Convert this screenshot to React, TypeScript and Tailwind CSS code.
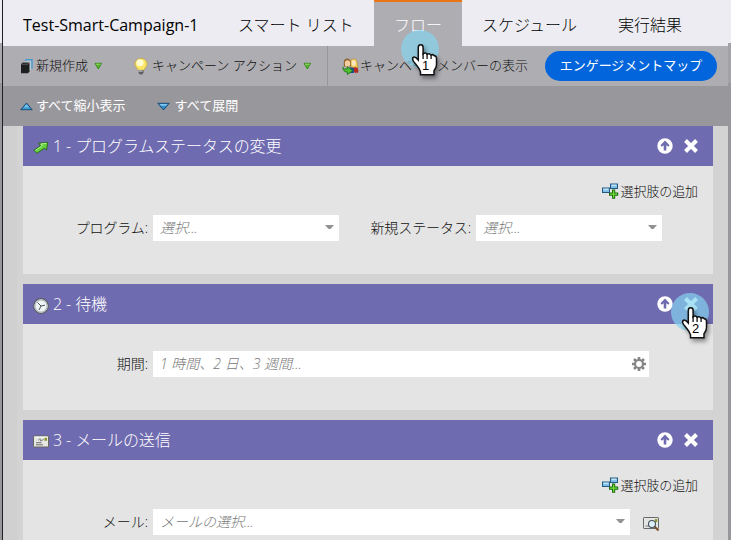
import React from "react";

const ja = "font-['Open_Sans','Noto_Sans_CJK_JP',sans-serif]";

function Label({ children, className = "" }: { children: React.ReactNode; className?: string }) {
  return <span className={`block shrink-0 whitespace-nowrap ${className}`}>{children}</span>;
}

function BooksIcon() {
  return (
    <svg width="12" height="15" viewBox="0 0 12 15" className="shrink-0">
      <path d="M4 1.800 5.500.7H11v9" fill="none" stroke="#3d9bd6" strokeWidth="1.300" />
      <path d="M3 3 4.500 2.300H10v8.500L8.500 12" fill="#c0ccd2" />
      <path d="M0 5 2 3.400h6.500v9L7 14.200H0z" fill="#1d1f21" />
      <path d="M.5 5.200h6.200l1.300-1.200" stroke="#777" strokeWidth=".7" fill="none" />
    </svg>
  );
}

function BulbIcon() {
  return (
    <svg width="14" height="17" viewBox="0 0 14 17" className="shrink-0">
      <path d="M7 .5C3.300.5 1 3 1 6c0 2.300 1.500 3.700 2.500 4.900.4.500.5 1.300.9 1.300h5.200c.4 0 .5-.8.9-1.300C11.500 9.700 13 8.300 13 6c0-3-2.300-5.500-6-5.500z" fill="#fbe566" stroke="#c9a63c" strokeWidth=".8" />
      <ellipse cx="6" cy="4.800" rx="3.600" ry="3.500" fill="#fffcd0" />
      <path d="M4.500 12h5v3L8 16.500H6L4.500 15z" fill="#5c6064" />
      <path d="M4.500 13h4" stroke="#e4e7ea" />
    </svg>
  );
}

function GreenDown() {
  return (
    <svg width="9" height="8" viewBox="0 0 9 8" className="shrink-0">
      <path d="M1 1.300h6.600L4.300 7z" fill="#58b82c" stroke="#32841b" strokeWidth=".9" />
      <path d="M2 2.200h4.500" stroke="#a6df78" strokeWidth=".8" />
    </svg>
  );
}

function BlueUp() {
  return (
    <svg width="13" height="9" viewBox="0 0 13 9" className="shrink-0">
      <path d="M6.500 1 12.200 7.700H.8z" fill="#3d9ad5" stroke="#17466d" strokeWidth=".9" />
      <path d="M6.500 2.500 9 5.200H4z" fill="#82c7ec" />
    </svg>
  );
}

function BlueDown() {
  return (
    <svg width="13" height="9" viewBox="0 0 13 9" className="shrink-0">
      <path d="M6.500 8 .8 1.300h11.400z" fill="#2f8ccb" stroke="#17466d" strokeWidth=".9" />
      <path d="M2.500 2h8L9 3.800H4z" fill="#82c7ec" />
    </svg>
  );
}

function MembersIcon() {
  return (
    <svg width="17" height="17" viewBox="0 0 17 17" className="shrink-0">
      <path d="M8.500 3c.5-2.800 5.500-3 6.500 0l1 7h-7z" fill="#edc95a" stroke="#a77b24" strokeWidth=".5" />
      <ellipse cx="11.800" cy="5" rx="2.100" ry="3" fill="#fbe6ba" />
      <path d="M10 10.500q3-2 5.500-.5 1.500 2 .8 4.500L13 15z" fill="#b02c24" />
      <path d="M1.800 8.500V4c0-4.500 6.500-4.800 7 0v4.500z" fill="#8f6130" />
      <ellipse cx="5.500" cy="5.600" rx="2.700" ry="3.300" fill="#f4ce9e" />
      <path d="M7 10q4-2 5 1v4H7z" fill="#20508e" />
      <path d="M.8 9.300q1 2.200 4.500 1.800V8.500l5.500 4.300-5.500 3.700V14Q1 14.200.8 9.300z" fill="#4dc22f" stroke="#176d15" strokeWidth=".8" />
    </svg>
  );
}

function StatusArrow() {
  return (
    <svg width="16" height="14" viewBox="0 0 16 14" className="shrink-0">
      <path d="M.8 9.300 7.500 4.700 5.500 2.300l9.300-1-1.300 7.700-2.200-1.700L4 12.300z" fill="#63cf3b" stroke="#25641c" strokeWidth=".9" />
      <path d="M2.300 9.500 9.300 4.700 8 3l5.500-.7" fill="none" stroke="#b8ef91" />
    </svg>
  );
}

function ClockIcon() {
  return (
    <svg width="16" height="16" viewBox="0 0 16 16" className="shrink-0">
      <circle cx="8" cy="8" r="7.300" fill="#eff4f5" stroke="#565b5f" strokeWidth="1.200" />
      <circle cx="8" cy="8" r="6.100" fill="none" stroke="#b1b8bb" strokeWidth="1.200" />
      <path d="M4.500 4.500 8 8l4-.8M8 8l-2 4" fill="none" stroke="#4c535b" strokeWidth="1" />
    </svg>
  );
}

function MailIcon() {
  return (
    <svg width="16" height="13" viewBox="0 0 16 13" className="shrink-0">
      <rect x=".5" y="1" width="15" height="11" rx=".6" fill="#e6e6e2" stroke="#66675f" />
      <path d="M1.500 2h13" stroke="#fff" />
      <rect x="11.500" y="2.800" width="2.500" height="3" fill="#92952c" />
      <path d="M3 7.700h5.500M3 9.800h7" stroke="#6d7070" strokeWidth="1" />
      <path d="M5.500 5.500q.5-2.500 2-1.500t-.5 2q2 0 4-2" fill="none" stroke="#7b8283" strokeWidth=".9" />
    </svg>
  );
}

function MailSearchIcon() {
  return (
    <svg width="17" height="15" viewBox="0 0 17 15" className="shrink-0">
      <rect x=".5" y="1.500" width="15" height="11" rx=".6" fill="#e4e6e4" stroke="#686b6b" />
      <rect x="12" y="3" width="2.300" height="3" fill="#92952c" />
      <path d="M2.500 10h4" stroke="#777" />
      <path d="m11.500 10.500 4 4" stroke="#79502e" strokeWidth="2" />
      <circle cx="9" cy="8" r="3.500" fill="#dcf0f7" stroke="#46525a" strokeWidth="1.100" />
    </svg>
  );
}

function AddChoice() {
  return (
    <div className="flex items-center gap-[2px] text-[13px] leading-5 text-[#111]">
      <svg width="17" height="16" viewBox="0 0 17 16" className="shrink-0">
        <rect x=".5" y="5" width="7" height="4.500" fill="#7fc1ea" stroke="#24587f" />
        <rect x="8.500" y="1" width="7" height="4.500" fill="#7fc1ea" stroke="#24587f" />
        <path d="M1.500 6.200h5M9.500 2.200h5" stroke="#def5ff" />
        <path d="M10 6.500h3.200v3h3v3.200h-3v3H10v-3H7V9.500h3z" fill="#1c6a14" />
        <path d="M11.600 7.500v7.200M8 11.100h7.200" stroke="#70df32" strokeWidth="1.300" />
      </svg>
      <Label className="font-light tracking-[-0.1px]">選択肢の追加</Label>
    </div>
  );
}

function UpIcon() {
  return (
    <svg width="16" height="16" viewBox="0 0 16 16" className="shrink-0">
      <circle cx="8" cy="8" r="7.700" fill="#fff" />
      <path d="M8 2.600 12.500 7.300l-1.300 1.400-1.900-1.500v5.300H6.700V7.200L4.800 8.700 3.500 7.300z" fill="#6f6bb0" />
    </svg>
  );
}

function CloseIcon() {
  return (
    <svg width="14" height="14" viewBox="0 0 14 14" className="shrink-0">
      <path d="m1.500 1.500 11 11m0-11-11 11" stroke="#fff" strokeWidth="4" />
    </svg>
  );
}

function Gear() {
  return (
    <svg width="14" height="14" viewBox="0 0 14 14" className="shrink-0">
      <g stroke="#858585" strokeWidth="2.600">
        <path d="M7 0v3M7 11v3M0 7h3M11 7h3M2 2l2.200 2.200M9.800 9.800 12 12M12 2 9.800 4.200M4.200 9.800 2 12" />
        <circle cx="7" cy="7" r="4" fill="#fff" strokeWidth="2.200" />
      </g>
    </svg>
  );
}

function Caret() {
  return (
    <svg width="9" height="5" viewBox="0 0 9 5" className="shrink-0">
      <path d="M0 0h9L5.500 4h-2z" fill="#929292" />
    </svg>
  );
}

function Field({ width, text, gear = false }: { width: string; text: string; gear?: boolean }) {
  return (
    <div className={`flex h-[26px] shrink-0 items-center justify-between bg-white pl-[7px] ${gear ? "pr-[3px]" : "pr-[5px]"} text-sm italic text-[#777] ${width}`}>
      <Label className="font-light">{text}</Label>
      {gear ? <Gear /> : <div className="pb-0.5"><Caret /></div>}
    </div>
  );
}

function Card({ title, icon, height, children }: { title: string; icon: React.ReactNode; height: string; children: React.ReactNode }) {
  return (
    <section className={`shrink-0 bg-[#e4e4e4] ${height}`}>
      <header className="flex h-10 items-center bg-[#6f6bb0] pl-[10px] pr-[15px] text-white">
        <div className="flex w-5 items-center pt-[3px]">{icon}</div>
        <h2 className="flex-1 whitespace-nowrap text-base font-light leading-6 tracking-[-0.1px]">{title}</h2>
        <div className="flex items-center gap-[11px]">
          <UpIcon />
          <CloseIcon />
        </div>
      </header>
      {children}
    </section>
  );
}

function Pointer({ n, className }: { n: number; className: string }) {
  return (
    <div className={`absolute h-[56px] w-[44px] ${className}`}>
      <svg width="44" height="56" viewBox="0 0 44 56">
        <circle cx="19" cy="19" r="19" fill="#84d3ef" fillOpacity=".69" />
        <path
          d="M17.300 30V17.500q0-2.700 2.400-2.700t2.400 2.700v6.300q2.200-1.800 4 .5 2.200-1.500 4 .8 2-1.200 3.300.8 2.100-.3 2.100 2.800v6q0 3-2.500 6v4H19.500v-3q-1-3-3.500-6l-3.700-4.500q-1.500-3.200.2-4 2-.6 4.800 2.800z"
          fill="#fff" stroke="#111" strokeWidth="1.500" className="drop-shadow-[2px_3px_2px_rgba(0,0,0,0.4)]"
        />
        <path d="M22.100 23v6m4-5v5m4-4v4" stroke="#111" strokeWidth="1.300" />
      </svg>
      <span className="absolute left-[21px] top-[29px] font-['Liberation_Sans',sans-serif] text-[13px] leading-[14px] text-black">{n}</span>
    </div>
  );
}

export default function App() {
  return (
    <div className={`relative flex h-[540px] w-[731px] overflow-hidden bg-[#98979c] ${ja}`}>
      <div className="flex w-0.5 shrink-0 flex-col">
        <div className="h-[43px] bg-[#ececf2]" />
        <div className="h-10 bg-[#a9a8ad]" />
      </div>
      <div className="w-px shrink-0 bg-[#202020]" />
      <main className="flex w-[725px] shrink-0 flex-col bg-[#d3d3d3]">
        <nav className="flex h-[46px] shrink-0 bg-[#ececf2] text-base leading-[50px] text-black">
          <Label className="w-[235px] pl-5">Test-Smart-Campaign-1</Label>
          <Label className="w-[136px] font-light">スマート リスト</Label>
          <Label className="w-[88px] border-t-2 border-[#e97516] bg-[#aeadb2] text-center font-light leading-[46px] text-white">フロー</Label>
          <Label className="w-[156px] pl-5 font-light">スケジュール</Label>
          <Label className="font-light">実行結果</Label>
        </nav>
        <div className="flex h-10 shrink-0 items-center bg-[#aeadb2] text-[13px] font-light text-[#111]">
          <div className="flex w-[113px] items-center pl-[18px]">
            <BooksIcon />
            <Label className="ml-[3px] mr-1.5">新規作成</Label>
            <GreenDown />
          </div>
          <div className="flex w-[211px] items-center pl-[18px]">
            <BulbIcon />
            <Label className="ml-1 mr-1.5">キャンペーン アクション</Label>
            <GreenDown />
          </div>
          <div className="flex h-10 w-[218px] items-center border-l border-[#98979c] pl-[14px]">
            <MembersIcon />
            <Label className="ml-px">キャンペーンメンバーの表示</Label>
          </div>
          <button className="h-[30px] w-[172px] rounded-full bg-[#0265dc] text-[13px] font-normal text-white">エンゲージメントマップ</button>
        </div>
        <div className="flex h-10 shrink-0 items-center bg-[#98979c] pl-[17px] text-[13px] text-white">
          <BlueUp />
          <Label className="ml-[3px] mr-[31px]">すべて縮小表示</Label>
          <BlueDown />
          <Label className="ml-[5px]">すべて展開</Label>
        </div>
        <div className="flex h-[414px] shrink-0 flex-col gap-2.5 border-l-[14px] border-[#d0d0d0] pl-1.5 pr-[15px] text-sm text-[#111]">
          <Card title="1 - プログラムステータスの変更" icon={<StatusArrow />} height="h-[148px]">
            <div className="flex justify-end pr-[15px] pt-[15px]"><AddChoice /></div>
            <div className="flex items-center pt-[14px]">
              <Label className="w-[130px] pr-[5px] text-right font-light tracking-[-0.1px]">プログラム:</Label>
              <Field width="w-[186px]" text="選択..." />
              <Label className="w-[137px] pr-[5px] text-right font-light tracking-[-0.1px]">新規ステータス:</Label>
              <Field width="w-[186px]" text="選択..." />
            </div>
          </Card>
          <Card title="2 - 待機" icon={<ClockIcon />} height="h-[126px]">
            <div className="flex items-center pt-[27px]">
              <Label className="w-[130px] pr-[5px] text-right font-light">期間:</Label>
              <Field width="w-[496px]" text="1 時間、2 日、3 週間..." gear />
            </div>
          </Card>
          <Card title="3 - メールの送信" icon={<MailIcon />} height="h-[120px]">
            <div className="flex justify-end pr-[15px] pt-[15px]"><AddChoice /></div>
            <div className="flex items-center pt-[14px]">
              <Label className="w-[130px] pr-[5px] text-right font-light">メール:</Label>
              <Field width="w-[477px]" text="メールの選択..." />
              <div className="pl-[13px] pt-0.5"><MailSearchIcon /></div>
            </div>
          </Card>
        </div>
      </main>
      <div className="h-[83px] w-[3px] shrink-0 border-t-[43px] border-[#ececf2] bg-[#a3a2a7]" />
      <Pointer n={1} className="left-[401px] top-[30px]" />
      <Pointer n={2} className="left-[671px] top-[293px]" />
    </div>
  );
}
